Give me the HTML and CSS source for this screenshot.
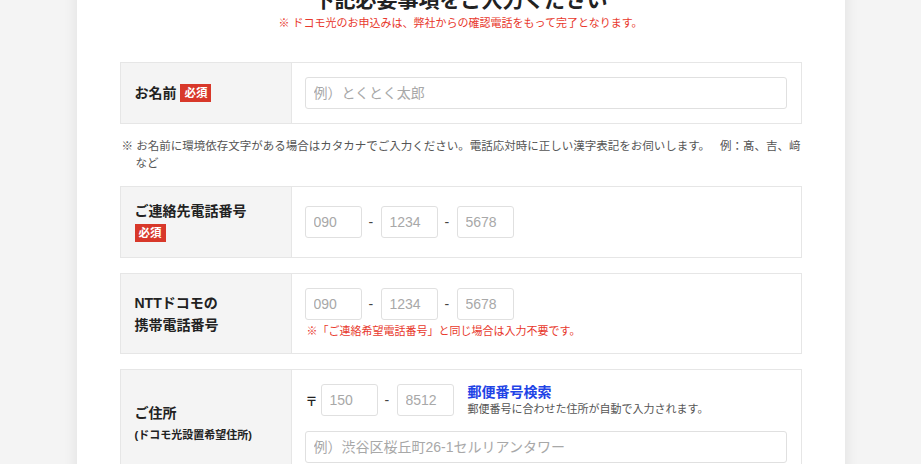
FILE: index.html
```html
<!DOCTYPE html>
<html lang="ja">
<head>
    <meta charset="UTF-8">
    <meta name="viewport" content="width=device-width, initial-scale=1.0">
    <title>お申込みフォーム</title>
    <link rel="stylesheet" href="styles.css">
</head>
<body>
    <div class="card">
        <h1 class="form-title">下記必要事項をご入力ください</h1>
        <p class="form-lead">※ ドコモ光のお申込みは、弊社からの確認電話をもって完了となります。</p>

        <!-- 名前 -->
        <div class="row">
            <div class="row-label">
                <span>お名前 <span class="req">必須</span></span>
            </div>
            <div class="row-body">
                <input class="text-input" type="text" placeholder="例）とくとく太郎">
            </div>
        </div>
        <p class="note">※ お名前に環境依存文字がある場合はカタカナでご入力ください。電話応対時に正しい漢字表記をお伺いします。<span class="note-ex">例：髙、吉、﨑</span> など</p>

        <!-- 連絡先 -->
        <div class="row">
            <div class="row-label">
                <span>ご連絡先電話番号</span>
                <span><span class="req">必須</span></span>
            </div>
            <div class="row-body">
                <div class="tel">
                    <input class="num-input" type="text" placeholder="090">
                    <span class="dash">-</span>
                    <input class="num-input" type="text" placeholder="1234">
                    <span class="dash">-</span>
                    <input class="num-input" type="text" placeholder="5678">
                </div>
            </div>
        </div>

        <!-- 携帯 -->
        <div class="row spaced">
            <div class="row-label">
                <span>NTTドコモの</span>
                <span>携帯電話番号</span>
            </div>
            <div class="row-body">
                <div class="tel">
                    <input class="num-input" type="text" placeholder="090">
                    <span class="dash">-</span>
                    <input class="num-input" type="text" placeholder="1234">
                    <span class="dash">-</span>
                    <input class="num-input" type="text" placeholder="5678">
                </div>
                <p class="warn">※「ご連絡希望電話番号」と同じ場合は入力不要です。</p>
            </div>
        </div>

        <!-- 住所 -->
        <div class="row spaced">
            <div class="row-label">
                <span>ご住所</span>
                <span class="sub-label">(ドコモ光設置希望住所)</span>
            </div>
            <div class="row-body stack">
                <div class="zip">
                    <span class="zip-mark">〒</span>
                    <input class="num-input" type="text" placeholder="150">
                    <span class="dash">-</span>
                    <input class="num-input" type="text" placeholder="8512">
                    <div class="zip-search">
                        <a href="#" class="zip-link">郵便番号検索</a>
                        <span class="zip-help">郵便番号に合わせた住所が自動で入力されます。</span>
                    </div>
                </div>
                <input class="text-input" type="text" placeholder="例）渋谷区桜丘町26-1セルリアンタワー">
            </div>
        </div>
    </div>
</body>
</html>
```

FILE: styles.css
```css
body {
    margin: 0;
    background: #f4f4f4;
    font-family: "Liberation Sans", "Noto Sans CJK JP", sans-serif;
    color: #222;
}
.card {
    width: 682px;
    margin: -15px auto 0;
    padding: 0 43px 40px;
    background: #fff;
    box-shadow: 0 0 14px rgba(0, 0, 0, 0.09);
}
.form-title {
    margin: 0;
    font-size: 21px;
    line-height: 30px;
    text-align: center;
}
.form-lead {
    margin: 0 0 31px;
    font-size: 11px;
    line-height: 16px;
    color: #e8382c;
    text-align: center;
}
.row {
    display: flex;
    border: 1px solid #e6e6e6;
}
.row.spaced {
    margin-top: 15px;
}
.row-label {
    width: 156px;
    flex-shrink: 0;
    padding: 0 0 0 14px;
    background: #f4f4f4;
    border-right: 1px solid #e6e6e6;
    display: flex;
    flex-direction: column;
    justify-content: center;
    font-size: 14px;
    font-weight: bold;
    line-height: 22px;
}
.req {
    display: inline-block;
    padding: 0 4px;
    background: #d8382a;
    color: #fff;
    font-size: 11.5px;
    line-height: 18px;
    vertical-align: 1px;
}
.sub-label {
    font-size: 11px;
}
.row-body {
    flex: 1;
    padding: 14px 14px 14px 13px;
}
.stack {
    display: flex;
    flex-direction: column;
    gap: 15px;
}
.text-input,
.num-input {
    box-sizing: border-box;
    height: 32px;
    padding: 0 8px;
    border: 1px solid #e0e0e0;
    border-radius: 3px;
    font-family: inherit;
    font-size: 14px;
    color: #222;
}
.text-input {
    width: 100%;
}
.num-input {
    width: 57px;
}
::placeholder {
    color: #a8a8a8;
}
.tel,
.zip {
    display: flex;
    align-items: center;
    gap: 7px;
}
.row-body .tel {
    padding: 5px 0;
}
.spaced .row-body .tel {
    padding: 0;
}
.dash {
    width: 5px;
    font-size: 14px;
    color: #444;
}
.warn {
    margin: 3px 0 0 2px;
    font-size: 11px;
    line-height: 16px;
    color: #e8382c;
}
.zip {
    height: 32px;
}
.zip-mark {
    width: 10px;
    margin: 0 -2px 0 1px;
    font-size: 12px;
    font-weight: bold;
}
.zip-search {
    display: flex;
    flex-direction: column;
    margin-left: 7px;
}
.zip-link {
    font-size: 14px;
    line-height: 18px;
    font-weight: bold;
    color: #1f44e6;
    text-decoration: none;
}
.zip-help {
    font-size: 11px;
    line-height: 17px;
    color: #555;
}
.note {
    margin: 14px 0 14px;
    padding-left: 16px;
    text-indent: -14px;
    font-size: 11.5px;
    line-height: 17px;
    color: #555;
}
.note-ex {
    margin-left: 10px;
    white-space: nowrap;
}
```
